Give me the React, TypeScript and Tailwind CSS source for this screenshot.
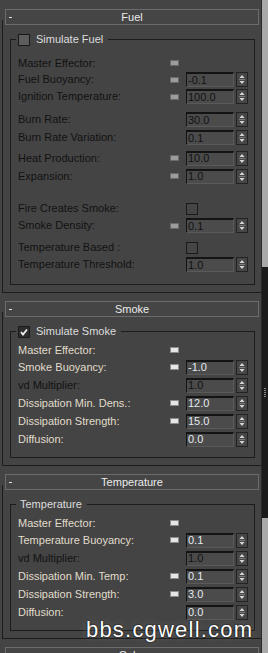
import React from "react";

const FONT = "font-['Liberation_Sans',Arial,sans-serif]";
const LIGHT = "text-[#e0dccb]";
const DARK = "text-[#121212]";

type R = {
  label: string;
  h: string;
  mt?: string;
  map?: boolean;
  value?: string;
  check?: boolean;
  on?: boolean;
};

function MapBtn({ on }: { on: boolean }) {
  return (
    <span
      className={`block w-[9px] h-[6px] border ${
        on ? "bg-[#e6e6e6] border-[#8c8c8c]" : "bg-[#9c9c9c] border-[#6a6a6a]"
      }`}
    />
  );
}

function Spin() {
  return (
    <svg width="12" height="15" viewBox="0 0 12 15" className="block">
      <rect x="0.5" y="0.5" width="11" height="14" fill="#464646" stroke="#232323" />
      <polygon points="3.5,6 6,3 8.5,6" fill="#d8d8d8" />
      <line x1="3" y1="7.5" x2="9" y2="7.5" stroke="#7c7c7c" />
      <polygon points="3.5,9 8.5,9 6,12" fill="#d8d8d8" />
    </svg>
  );
}

function Field({ v, on }: { v: string; on: boolean }) {
  return (
    <div
      className={`w-[48px] h-[15px] border-t-2 border-l border-r border-b border-t-[#141414] border-l-[#141414] border-r-[#5a5a5a] border-b-[#5a5a5a] bg-[#4b4b4b] pl-[1px] flex items-center text-[11px] leading-none ${
        on ? "text-[#e2e9f0]" : "text-[#121212]"
      }`}
    >
      {v}
    </div>
  );
}

function Box({ checked, fill }: { checked?: boolean; fill?: boolean }) {
  return (
    <span
      className={`flex items-center justify-center w-[12px] h-[12px] border border-[#1a1a1a] ${
        checked ? "bg-[#2e2e2e]" : fill ? "bg-[#5c5c5c]" : "bg-[#454545]"
      }`}
    >
      {checked && (
        <svg width="10" height="10" viewBox="0 0 10 10">
          <polyline points="2,5 4,7.5 8,2.5" fill="none" stroke="#f0f0f0" strokeWidth="1.8" />
        </svg>
      )}
    </span>
  );
}

function Row({ r }: { r: R }) {
  return (
    <div className={`flex items-center ${r.h} ${r.mt ?? ""}`}>
      <span className={`flex-1 whitespace-nowrap text-[11px] leading-none ${r.on ? LIGHT : DARK}`}>
        {r.label}
      </span>
      <div className="flex items-center w-[78px]">
        <div className="w-[9px]">{r.map && <MapBtn on={!!r.on} />}</div>
        <div className="ml-[7px] w-[48px]">
          {r.check ? <Box /> : r.value !== undefined ? <Field v={r.value} on={!!r.on} /> : null}
        </div>
        <div className="ml-[2px] w-[12px]">{r.value !== undefined && !r.check && <Spin />}</div>
      </div>
    </div>
  );
}

function Header({ title }: { title: string }) {
  return (
    <div className="relative z-10 ml-[5px] w-[254px] h-[16px] border border-[#6c6c6c] bg-[#454545] grid grid-cols-[1fr_auto_1fr] items-center">
      <div className="pl-[3px] flex items-center">
        <span className="block w-[3px] h-[1px] bg-[#e0e0e0]" />
      </div>
      <span className="text-[11px] leading-none text-[#ececec]">{title}</span>
      <div />
    </div>
  );
}

function Rollout({
  title,
  legend,
  rows,
  pb,
  mt,
}: {
  title: string;
  legend: React.ReactNode;
  rows: R[];
  pb: string;
  mt?: string;
}) {
  return (
    <div className={mt ?? ""}>
      <Header title={title} />
      <div className="-mt-[5px] ml-[2px] w-[259px] border-l border-b border-[#1c1c1c] pt-[19px] pb-[7px]">
        <div className={`ml-[7px] w-[245px] border border-[#1c1c1c] pl-[7px] pr-[6px] ${pb}`}>
          <div className="-mt-[7px] -ml-[2px] h-[13px] w-fit flex items-center bg-[#444444]">{legend}</div>
          {rows.map((r, i) => (
            <Row key={i} r={r} />
          ))}
        </div>
      </div>
    </div>
  );
}

const fuelRows: R[] = [
  { label: "Master Effector:", h: "h-[16px]", mt: "mt-[9px]", map: true },
  { label: "Fuel Buoyancy:", h: "h-[17px]", map: true, value: "-0.1" },
  { label: "Ignition Temperature:", h: "h-[17px]", map: true, value: "100.0" },
  { label: "Burn Rate:", h: "h-[17px]", mt: "mt-[6px]", value: "30.0" },
  { label: "Burn Rate Variation:", h: "h-[17px]", mt: "mt-[1px]", value: "0.1" },
  { label: "Heat Production:", h: "h-[18px]", mt: "mt-[3px]", map: true, value: "10.0" },
  { label: "Expansion:", h: "h-[18px]", map: true, value: "1.0" },
  { label: "Fire Creates Smoke:", h: "h-[17px]", mt: "mt-[15px]", check: true },
  { label: "Smoke Density:", h: "h-[17px]", map: true, value: "0.1" },
  { label: "Temperature Based :", h: "h-[17px]", mt: "mt-[5px]", check: true },
  { label: "Temperature Threshold:", h: "h-[17px]", value: "1.0" },
];

const smokeRows: R[] = [
  { label: "Master Effector:", h: "h-[16px]", mt: "mt-[4px]", map: true, on: true },
  { label: "Smoke Buoyancy:", h: "h-[18px]", map: true, value: "-1.0", on: true },
  { label: "vd Multiplier:", h: "h-[18px]", value: "1.0" },
  { label: "Dissipation Min. Dens.:", h: "h-[18px]", map: true, value: "12.0", on: true },
  { label: "Dissipation Strength:", h: "h-[18px]", map: true, value: "15.0", on: true },
  { label: "Diffusion:", h: "h-[18px]", value: "0.0", on: true },
];

const tempRows: R[] = [
  { label: "Master Effector:", h: "h-[16px]", mt: "mt-[4px]", map: true, on: true },
  { label: "Temperature Buoyancy:", h: "h-[18px]", map: true, value: "0.1", on: true },
  { label: "vd Multiplier:", h: "h-[18px]", value: "1.0" },
  { label: "Dissipation Min. Temp:", h: "h-[18px]", map: true, value: "0.1", on: true },
  { label: "Dissipation Strength:", h: "h-[18px]", map: true, value: "3.0", on: true },
  { label: "Diffusion:", h: "h-[18px]", value: "0.0", on: true },
];

export default function App() {
  return (
    <div className={`relative w-[268px] h-[653px] overflow-hidden bg-[#444444] flex ${FONT}`}>
      <div className="w-[261px] pt-[9px]">
        <Rollout
          title="Fuel"
          pb="pb-[11px]"
          rows={fuelRows}
          legend={
            <div className="flex items-center gap-[6px] px-[2px] pr-[5px]">
              <Box fill />
              <span className="text-[11px] leading-none text-[#dcdcdc]">Simulate Fuel</span>
            </div>
          }
        />
        <Rollout
          title="Smoke"
          mt="mt-[8px]"
          pb="pb-[9px]"
          rows={smokeRows}
          legend={
            <div className="flex items-center gap-[6px] px-[2px] pr-[5px]">
              <Box checked />
              <span className="text-[11px] leading-none text-[#dcdcdc]">Simulate Smoke</span>
            </div>
          }
        />
        <Rollout
          title="Temperature"
          mt="mt-[8px]"
          pb="pb-[9px]"
          rows={tempRows}
          legend={
            <div className="flex items-center px-[4px] pr-[5px]">
              <span className="text-[11px] leading-none text-[#dcdcdc]">Temperature</span>
            </div>
          }
        />
        <div className="mt-[8px]">
          <Header title="Color" />
          <div className="-mt-[5px] ml-[2px] w-[259px] h-[40px] border-l border-[#1c1c1c]" />
        </div>
      </div>
      <div className="w-[7px] h-full border-l border-[#2a2a2a] bg-[#a9a9a9] flex flex-col">
        <div className="h-[267px]" />
        <div className="h-[251px] bg-[#1b1b1b] flex flex-col items-center justify-center gap-[1px]">
          <span className="block w-[2px] h-[1px] bg-[#8a8a8a]" />
          <span className="block w-[2px] h-[1px] bg-[#8a8a8a]" />
          <span className="block w-[2px] h-[1px] bg-[#8a8a8a]" />
          <span className="block w-[2px] h-[1px] bg-[#8a8a8a]" />
          <span className="block w-[2px] h-[1px] bg-[#8a8a8a]" />
        </div>
      </div>
      <span className="absolute left-[86px] top-[619px] text-[22px] leading-none tracking-[1.2px] text-white whitespace-nowrap [text-shadow:0_0_1px_#000,0_0_3px_rgba(0,0,0,0.9),0_0_6px_rgba(255,255,255,0.35)]">
        bbs.cgwell.com
      </span>
    </div>
  );
}
